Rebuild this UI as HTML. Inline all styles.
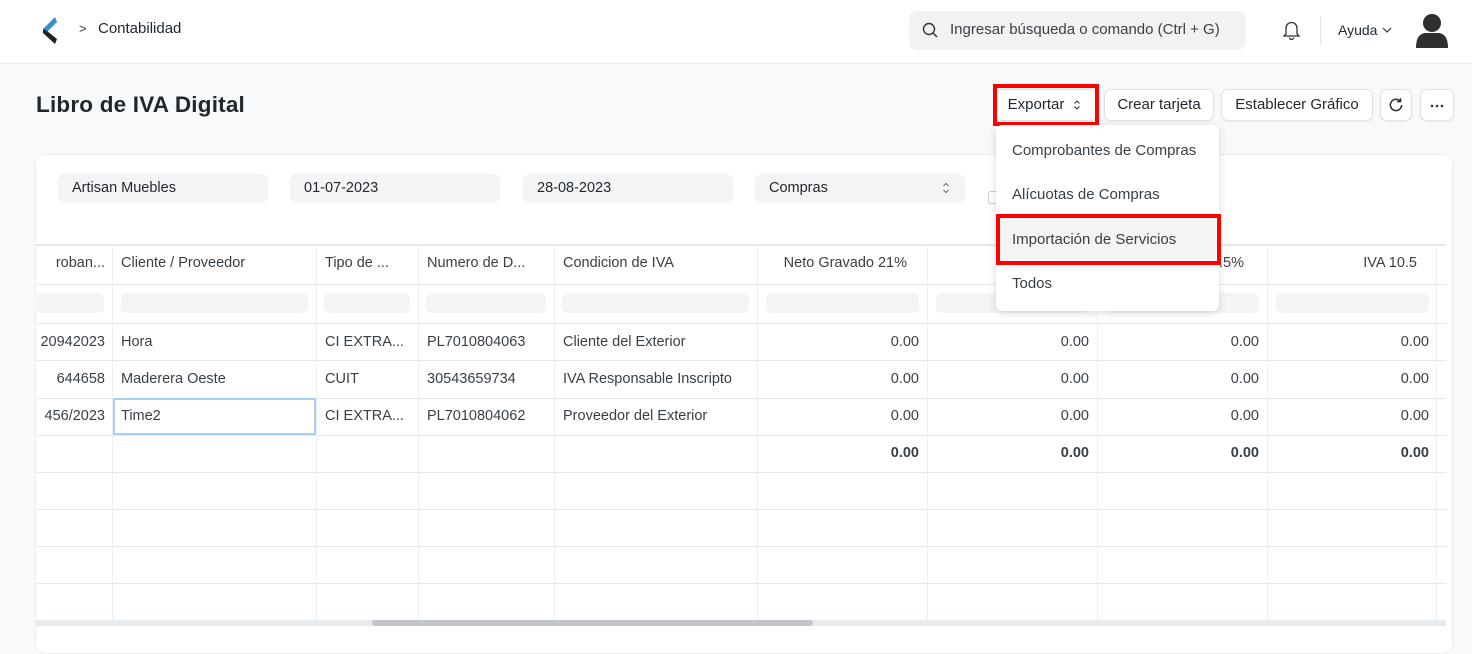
<!DOCTYPE html>
<html><head><meta charset="utf-8"><style>
*{box-sizing:border-box;margin:0;padding:0}
body{width:1472px;height:646px;overflow:hidden;background:#f8f9fa;font-family:"Liberation Sans",sans-serif;color:#1f272e;position:relative}
.a{position:absolute}
.nav{left:0;top:0;width:1472px;height:64px;background:#fff;border-bottom:1px solid #e7e9ec}
.t{font-size:14.5px;color:#383f45;white-space:nowrap;line-height:16px}
.btn{position:absolute;top:89px;height:32px;background:#fff;border:1px solid #dfe2e5;border-radius:7px;font-size:15px;color:#1f272e;text-align:center;line-height:30px;box-shadow:0 1px 2px rgba(0,0,0,.06)}
.fld{position:absolute;top:174px;height:29px;width:210px;background:#f3f4f6;border-radius:7px;font-size:14.5px;line-height:29px;padding-left:14px;color:#1f272e}
.hl{position:absolute;height:1px;background:#e5e8eb;left:35px;width:1411px}
.vl{position:absolute;width:1px;background:#edeff1;top:245px;height:375px}
.fb{position:absolute;top:293px;height:20px;background:#f3f4f6;border-radius:6px}
.r{text-align:right}
.dd{font-size:15px;color:#383f45;left:1012px}
</style></head><body>
<div class="a nav"></div>
<svg class="a" style="left:40px;top:16px" width="20" height="29" viewBox="0 0 20 29"><path d="M15 1 L3 13 L7 16 L17 6Z" fill="#3a8fc6"/><path d="M3 13 L3 17 L15 28 L17 23 L7 15Z" fill="#222"/></svg>
<div class="a t" style="left:79px;top:21px;font-size:13px">&gt;</div>
<div class="a t" style="left:98px;top:21px;font-size:15px;color:#1f272e">Contabilidad</div>
<div class="a" style="left:909px;top:11px;width:337px;height:39px;background:#f1f2f4;border-radius:8px"></div>
<svg class="a" style="left:922px;top:22px" width="17" height="17" viewBox="0 0 17 17"><circle cx="7" cy="7" r="5.5" fill="none" stroke="#333" stroke-width="1.4"/><path d="M11 11l4 4" stroke="#333" stroke-width="1.4"/></svg>
<div class="a t" style="left:950px;top:22px;font-size:15px;color:#383f45">Ingresar búsqueda o comando (Ctrl + G)</div>
<svg class="a" style="left:1282px;top:20px" width="19" height="20" viewBox="0 0 19 20"><path d="M4 14V8a5.5 5.5 0 0 1 11 0v6l2 2H2z M7.5 17.5a2 2 0 0 0 4 0" fill="none" stroke="#333" stroke-width="1.3"/></svg>
<div class="a" style="left:1320px;top:16px;width:1px;height:28px;background:#e2e4e7"></div>
<div class="a t" style="left:1338px;top:22px;font-size:14px;color:#1f272e">Ayuda</div>
<svg class="a" style="left:1382px;top:27px" width="10" height="6" viewBox="0 0 10 6"><path d="M1 1l4 4 4-4" fill="none" stroke="#333" stroke-width="1.2"/></svg>
<svg class="a" style="left:1415px;top:12px" width="34" height="36" viewBox="0 0 34 36"><circle cx="17" cy="11" r="9" fill="#2f2f2f"/><path d="M1 36 Q1 22 10 21 L24 21 Q33 22 33 36Z" fill="#2f2f2f"/></svg>

<div class="a" style="left:36px;top:92px;font-size:22.5px;font-weight:bold;color:#1f272e;letter-spacing:.2px">Libro de IVA Digital</div>

<div class="btn" style="left:995px;width:102px;padding-right:20px">Exportar</div>
<svg class="a" style="left:1073px;top:99px" width="8" height="12" viewBox="0 0 8 12"><path d="M1.5 4.5L4 2l2.5 2.5M1.5 7.5L4 10l2.5-2.5" fill="none" stroke="#333" stroke-width="1.1"/></svg>
<div class="a" style="left:993px;top:84px;width:106px;height:42px;border:4px solid #f00"></div>
<div class="btn" style="left:1104px;width:110px">Crear tarjeta</div>
<div class="btn" style="left:1221px;width:152px">Establecer Gráfico</div>
<div class="btn" style="left:1380px;width:32px"></div>
<svg class="a" style="left:1387px;top:96px" width="18" height="18" viewBox="0 0 16 16"><path d="M13 8a5 5 0 1 1-1.6-3.7M12 2v3h-3" fill="none" stroke="#333" stroke-width="1.4"/></svg>
<div class="btn" style="left:1420px;width:34px"></div>
<svg class="a" style="left:1430px;top:104px" width="14" height="4" viewBox="0 0 14 4"><circle cx="2" cy="2" r="1.3" fill="#333"/><circle cx="7" cy="2" r="1.3" fill="#333"/><circle cx="12" cy="2" r="1.3" fill="#333"/></svg>

<div class="a" style="left:35px;top:154px;width:1418px;height:500px;background:#fff;border:1px solid #eceef0;border-radius:10px"></div>
<div class="fld" style="left:58px">Artisan Muebles</div>
<div class="fld" style="left:290px">01-07-2023</div>
<div class="fld" style="left:523px">28-08-2023</div>
<div class="fld" style="left:755px">Compras</div>
<svg class="a" style="left:942px;top:181px" width="8" height="14" viewBox="0 0 8 14"><path d="M1.5 5L4 2.5 6.5 5M1.5 9L4 11.5 6.5 9" fill="none" stroke="#666" stroke-width="1"/></svg>
<div class="a" style="left:988px;top:191px;width:12px;height:13px;border:1px solid #ccc;border-radius:3px"></div>

<div class="hl" style="top:244px;height:2px"></div>
<div class="hl" style="top:284px"></div><div class="hl" style="top:323px"></div><div class="hl" style="top:360px"></div><div class="hl" style="top:398px"></div><div class="hl" style="top:435px"></div><div class="hl" style="top:472px"></div><div class="hl" style="top:509px"></div><div class="hl" style="top:546px"></div><div class="hl" style="top:583px"></div>
<div class="vl" style="left:112px"></div><div class="vl" style="left:316px"></div><div class="vl" style="left:418px"></div><div class="vl" style="left:554px"></div><div class="vl" style="left:757px"></div><div class="vl" style="left:927px"></div><div class="vl" style="left:1097px"></div><div class="vl" style="left:1267px"></div><div class="vl" style="left:1436px"></div>
<div class="a" style="left:35px;top:620px;width:1411px;height:6px;background:#e8ebee"></div>
<div class="a" style="left:372px;top:620px;width:441px;height:6px;background:#c1c5ca;border-radius:3px"></div>

<div class="fb" style="left:35px;width:69px"></div><div class="fb" style="left:121px;width:187px"></div><div class="fb" style="left:324px;width:86px"></div><div class="fb" style="left:426px;width:120px"></div><div class="fb" style="left:562px;width:187px"></div><div class="fb" style="left:766px;width:153px"></div><div class="fb" style="left:936px;width:153px"></div><div class="fb" style="left:1106px;width:153px"></div><div class="fb" style="left:1276px;width:153px"></div>

<div class="a" style="left:35px;top:255px;width:70px;overflow:hidden;height:18px"><div class="t" style="position:absolute;right:0;top:0">roban...</div></div>
<div class="a t" style="left:121px;top:255px">Cliente / Proveedor</div>
<div class="a t" style="left:325px;top:255px">Tipo de ...</div>
<div class="a t" style="left:427px;top:255px">Numero de D...</div>
<div class="a t" style="left:563px;top:255px">Condicion de IVA</div>
<div class="a t r" style="left:757px;width:150px;top:255px">Neto Gravado 21%</div>
<div class="a t" style="left:1219px;top:255px">.5%</div>
<div class="a t r" style="left:1267px;width:150px;top:255px">IVA 10.5</div>

<div class="a t r" style="left:35px;width:70px;top:334px">20942023</div>
<div class="a t r" style="left:35px;width:70px;top:371px">644658</div>
<div class="a t r" style="left:35px;width:70px;top:408px">456/2023</div>
<div class="a t" style="left:121px;top:334px">Hora</div>
<div class="a t" style="left:121px;top:371px">Maderera Oeste</div>
<div class="a" style="left:113px;top:398px;width:203px;height:37px;border:2px solid #a8d0f2"></div>
<div class="a t" style="left:121px;top:408px">Time2</div>
<div class="a t" style="left:325px;top:334px">CI EXTRA...</div>
<div class="a t" style="left:325px;top:371px">CUIT</div>
<div class="a t" style="left:325px;top:408px">CI EXTRA...</div>
<div class="a t" style="left:427px;top:334px">PL7010804063</div>
<div class="a t" style="left:427px;top:371px">30543659734</div>
<div class="a t" style="left:427px;top:408px">PL7010804062</div>
<div class="a t" style="left:563px;top:334px">Cliente del Exterior</div>
<div class="a t" style="left:563px;top:371px">IVA Responsable Inscripto</div>
<div class="a t" style="left:563px;top:408px">Proveedor del Exterior</div>

<div class="a t r" style="left:757px;width:162px;top:334px">0.00</div><div class="a t r" style="left:927px;width:162px;top:334px">0.00</div><div class="a t r" style="left:1097px;width:162px;top:334px">0.00</div><div class="a t r" style="left:1267px;width:162px;top:334px">0.00</div>
<div class="a t r" style="left:757px;width:162px;top:371px">0.00</div><div class="a t r" style="left:927px;width:162px;top:371px">0.00</div><div class="a t r" style="left:1097px;width:162px;top:371px">0.00</div><div class="a t r" style="left:1267px;width:162px;top:371px">0.00</div>
<div class="a t r" style="left:757px;width:162px;top:408px">0.00</div><div class="a t r" style="left:927px;width:162px;top:408px">0.00</div><div class="a t r" style="left:1097px;width:162px;top:408px">0.00</div><div class="a t r" style="left:1267px;width:162px;top:408px">0.00</div>
<div class="a t r" style="left:757px;width:162px;top:445px;font-weight:bold">0.00</div><div class="a t r" style="left:927px;width:162px;top:445px;font-weight:bold">0.00</div><div class="a t r" style="left:1097px;width:162px;top:445px;font-weight:bold">0.00</div><div class="a t r" style="left:1267px;width:162px;top:445px;font-weight:bold">0.00</div>

<div class="a" style="left:996px;top:125px;width:223px;height:186px;background:#fff;border-radius:6px;box-shadow:0 2px 8px rgba(0,0,0,.15)"></div>
<div class="a" style="left:999px;top:217px;width:217px;height:45px;background:#f3f4f6"></div>
<div class="a t dd" style="top:143px">Comprobantes de Compras</div>
<div class="a t dd" style="top:187px">Alícuotas de Compras</div>
<div class="a t dd" style="top:232px">Importación de Servicios</div>
<div class="a t dd" style="top:276px">Todos</div>
<div class="a" style="left:996px;top:214px;width:225px;height:51px;border:4px solid #f00"></div>
</body></html>
